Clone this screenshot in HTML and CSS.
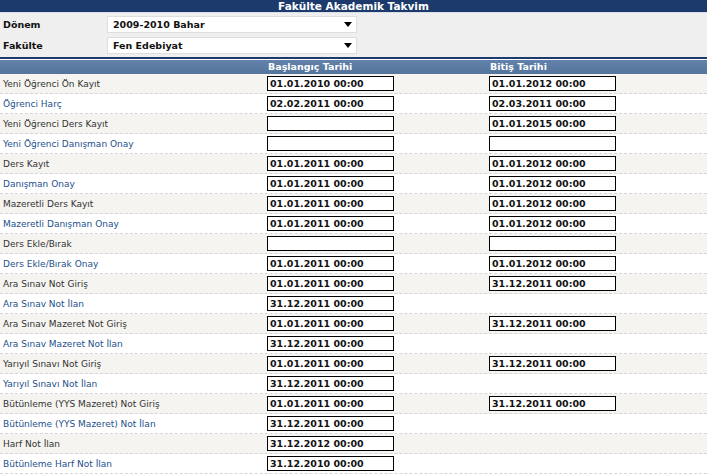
FILE: index.html
```html
<!DOCTYPE html>
<html lang="tr">
<head>
<meta charset="utf-8">
<title>Fakülte Akademik Takvim</title>
<link rel="stylesheet" href="styles.css">
</head>
<body>
<div class="page">
  <div class="title">Fakülte Akademik Takvim</div>
  <div class="filters">
    <div class="filter-row">
      <div class="filter-label">Dönem</div>
      <div class="select"><span>2009-2010 Bahar</span><svg class="arrow" width="8" height="5" viewBox="0 0 8 5"><path d="M0 0H8L4 5Z" fill="#000"/></svg></div>
    </div>
    <div class="filter-row">
      <div class="filter-label">Fakülte</div>
      <div class="select"><span>Fen Edebiyat</span><svg class="arrow" width="8" height="5" viewBox="0 0 8 5"><path d="M0 0H8L4 5Z" fill="#000"/></svg></div>
    </div>
  </div>
  <div class="thead">
    <div class="th"></div>
    <div class="th">Başlangıç Tarihi</div>
    <div class="th">Bitiş Tarihi</div>
  </div>
  <div class="rows">
    <div class="row"><div class="label">Yeni Öğrenci Ön Kayıt</div><div class="cell"><div class="box">01.01.2010 00:00</div></div><div class="cell"><div class="box">01.01.2012 00:00</div></div></div>
    <div class="row"><div class="label">Öğrenci Harç</div><div class="cell"><div class="box">02.02.2011 00:00</div></div><div class="cell"><div class="box">02.03.2011 00:00</div></div></div>
    <div class="row"><div class="label">Yeni Öğrenci Ders Kayıt</div><div class="cell"><div class="box"></div></div><div class="cell"><div class="box">01.01.2015 00:00</div></div></div>
    <div class="row"><div class="label">Yeni Öğrenci Danışman Onay</div><div class="cell"><div class="box"></div></div><div class="cell"><div class="box"></div></div></div>
    <div class="row"><div class="label">Ders Kayıt</div><div class="cell"><div class="box">01.01.2011 00:00</div></div><div class="cell"><div class="box">01.01.2012 00:00</div></div></div>
    <div class="row"><div class="label">Danışman Onay</div><div class="cell"><div class="box">01.01.2011 00:00</div></div><div class="cell"><div class="box">01.01.2012 00:00</div></div></div>
    <div class="row"><div class="label">Mazeretli Ders Kayıt</div><div class="cell"><div class="box">01.01.2011 00:00</div></div><div class="cell"><div class="box">01.01.2012 00:00</div></div></div>
    <div class="row"><div class="label">Mazeretli Danışman Onay</div><div class="cell"><div class="box">01.01.2011 00:00</div></div><div class="cell"><div class="box">01.01.2012 00:00</div></div></div>
    <div class="row"><div class="label">Ders Ekle/Bırak</div><div class="cell"><div class="box"></div></div><div class="cell"><div class="box"></div></div></div>
    <div class="row"><div class="label">Ders Ekle/Bırak Onay</div><div class="cell"><div class="box">01.01.2011 00:00</div></div><div class="cell"><div class="box">01.01.2012 00:00</div></div></div>
    <div class="row"><div class="label">Ara Sınav Not Giriş</div><div class="cell"><div class="box">01.01.2011 00:00</div></div><div class="cell"><div class="box">31.12.2011 00:00</div></div></div>
    <div class="row"><div class="label">Ara Sınav Not İlan</div><div class="cell"><div class="box">31.12.2011 00:00</div></div><div class="cell"></div></div>
    <div class="row"><div class="label">Ara Sınav Mazeret Not Giriş</div><div class="cell"><div class="box">01.01.2011 00:00</div></div><div class="cell"><div class="box">31.12.2011 00:00</div></div></div>
    <div class="row"><div class="label">Ara Sınav Mazeret Not İlan</div><div class="cell"><div class="box">31.12.2011 00:00</div></div><div class="cell"></div></div>
    <div class="row"><div class="label">Yarıyıl Sınavı Not Giriş</div><div class="cell"><div class="box">01.01.2011 00:00</div></div><div class="cell"><div class="box">31.12.2011 00:00</div></div></div>
    <div class="row"><div class="label">Yarıyıl Sınavı Not İlan</div><div class="cell"><div class="box">31.12.2011 00:00</div></div><div class="cell"></div></div>
    <div class="row"><div class="label">Bütünleme (YYS Mazeret) Not Giriş</div><div class="cell"><div class="box">01.01.2011 00:00</div></div><div class="cell"><div class="box">31.12.2011 00:00</div></div></div>
    <div class="row"><div class="label">Bütünleme (YYS Mazeret) Not İlan</div><div class="cell"><div class="box">31.12.2011 00:00</div></div><div class="cell"></div></div>
    <div class="row"><div class="label">Harf Not İlan</div><div class="cell"><div class="box">31.12.2012 00:00</div></div><div class="cell"></div></div>
    <div class="row"><div class="label">Bütünleme Harf Not İlan</div><div class="cell"><div class="box">31.12.2010 00:00</div></div><div class="cell"></div></div>
  </div>
</div>
</body>
</html>
```

FILE: styles.css
```css
html, body {
  margin: 0;
  padding: 0;
  background: #ffffff;
}

.page {
  width: 707px;
  font-family: "DejaVu Sans", Verdana, sans-serif;
  font-size: 9px;
  color: #333333;
}

.title {
  height: 12px;
  line-height: 12px;
  background: #1c3b6c;
  color: #ffffff;
  font-weight: bold;
  font-size: 10.5px;
  text-align: center;
  border-bottom: 1px solid #d9dfe8;
}

.filters {
  background: #efefef;
  padding: 3px 0 3px 0;
  display: flex;
  flex-direction: column;
  gap: 4px;
  height: 38px;
}

.filter-row {
  display: flex;
  align-items: center;
  height: 17px;
}

.filter-label {
  width: 104px;
  padding-left: 3px;
  font-weight: bold;
  font-size: 9.5px;
  color: #111111;
}

.select {
  width: 248px;
  height: 15px;
  background: #ffffff;
  border: 1px solid #dedede;
  display: flex;
  align-items: center;
  justify-content: space-between;
  font-weight: bold;
  font-size: 9.5px;
  color: #111111;
}

.select span {
  padding-left: 5px;
}

.select .arrow {
  margin-right: 4px;
}

.thead {
  display: grid;
  grid-template-columns: 265px 222px 1fr;
  height: 14px;
  border-top: 2px solid #1c3b6c;
  padding-top: 1px;
  background: linear-gradient(#ffffff 0 1px, #6282ab 1px, #55749c 100%);
}

.th {
  color: #ffffff;
  font-weight: bold;
  font-size: 9.5px;
  line-height: 14px;
  padding-left: 3px;
}

.rows {
  display: flex;
  flex-direction: column;
}

.row {
  display: grid;
  grid-template-columns: 265px 222px 1fr;
  height: 19px;
  border-bottom: 1px dashed #d6d6d6;
  align-items: start;
}

.row:nth-child(odd) {
  background: #f5f4f0;
}

.row:nth-child(even) {
  background: #ffffff;
}

.label {
  padding-left: 3px;
  line-height: 21px;
  font-size: 9px;
  color: #333333;
}

.row:nth-child(even) .label {
  color: #24508c;
}

.cell {
  padding-left: 2px;
  padding-top: 2px;
}

.box {
  box-sizing: border-box;
  width: 127px;
  height: 15px;
  border: 1px solid #000000;
  background: #ffffff;
  font-weight: bold;
  font-size: 9.5px;
  line-height: 14px;
  padding-left: 2px;
  color: #111111;
  white-space: nowrap;
}
```
